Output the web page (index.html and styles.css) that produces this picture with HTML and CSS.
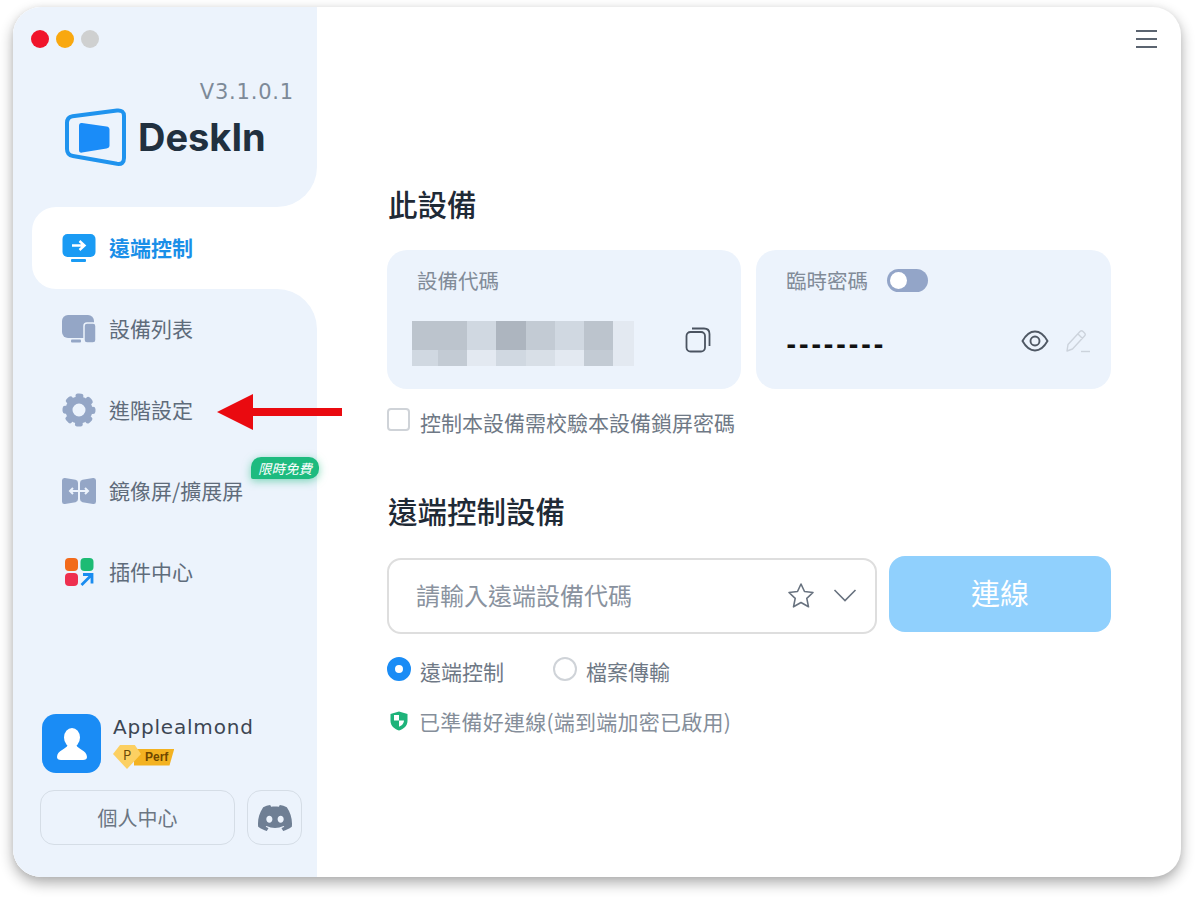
FILE: index.html
```html
<!DOCTYPE html>
<html lang="zh-Hant">
<head>
  <meta charset="UTF-8" />
  <title>DeskIn</title>
  <link rel="stylesheet" href="styles.css">
</head>
<body>
  <div class="window">
    <aside class="sidebar">
      <div class="side-head">
        <div class="dots">
          <span class="dot red"></span>
          <span class="dot orange"></span>
          <span class="dot grey"></span>
        </div>
        <div class="version">V3.1.0.1</div>
        <div class="logo">
          <svg width="62" height="58" viewBox="0 0 62 58">
            <path d="M3 15 Q3 9 8.500 8.200 L53 2.500 Q60 1.800 60 8 V50 Q60 56.800 53 55.800 L9 48 Q3 47 3 41 Z" fill="none" stroke="#1f93ee" stroke-width="4" stroke-linejoin="round"/>
            <path d="M15 18 Q15 14.600 18 15 L42.500 18.400 Q45.500 18.800 45.500 21.500 V37.500 Q45.500 40 42.500 40.400 L18 44.600 Q15 45 15 42 Z" fill="#1a8cf8"/>
          </svg>
          <span class="logo-text">DeskIn</span>
        </div>
      </div>

      <div class="active-row">
        <div class="nav-item active">
          <svg class="nav-icon" width="34" height="30" viewBox="0 0 34 30">
            <rect x="0.5" y="1" width="33" height="23" rx="5" fill="#1a9bf4"/>
            <rect x="9" y="26" width="15" height="3" rx="1" fill="#1a9bf4"/>
            <path d="M10 12.5 H22 M17.5 8 L22.5 12.5 L17.5 17" fill="none" stroke="#fff" stroke-width="2.4"/>
          </svg>
          <span>遠端控制</span>
        </div>
      </div>

      <div class="side-rest">
        <nav class="nav-list">
          <div class="nav-item">
            <svg class="nav-icon" width="34" height="30" viewBox="0 0 34 30">
              <rect x="0" y="1" width="32" height="23" rx="6" fill="#94a6c6"/>
              <rect x="9" y="25.500" width="10" height="3" rx="1" fill="#94a6c6"/>
              <rect x="22" y="9" width="12" height="20" rx="3" fill="#94a6c6" stroke="#ecf3fc" stroke-width="1.500"/>
            </svg>
            <span>設備列表</span>
          </div>
          <div class="nav-item">
            <svg class="nav-icon" width="34" height="34" viewBox="0 0 34 34">
              <circle cx="17" cy="17" r="14" fill="none" stroke="#94a6c6" stroke-width="5" stroke-linecap="round" stroke-dasharray="3 8" stroke-dashoffset="1.500"/>
              <circle cx="17" cy="17" r="10" fill="none" stroke="#94a6c6" stroke-width="7"/>
            </svg>
            <span>進階設定</span>
          </div>
          <div class="nav-item">
            <svg class="nav-icon" width="34" height="28" viewBox="0 0 34 28">
              <path d="M3 1 L13.500 2.800 Q16 3.300 16 6 V22 Q16 24.700 13.500 25.200 L3 27 Q0 27.400 0 24.500 V3.500 Q0 .6 3 1 Z" fill="#94a6c6"/>
              <path d="M31 1 L20.500 2.800 Q18 3.300 18 6 V22 Q18 24.700 20.500 25.200 L31 27 Q34 27.400 34 24.500 V3.500 Q34 .6 31 1 Z" fill="#94a6c6"/>
              <path d="M8 14 H26 M11 11 L8 14 L11 17 M23 11 L26 14 L23 17" fill="none" stroke="#ecf3fc" stroke-width="2"/>
            </svg>
            <span>鏡像屏/擴展屏</span>
          </div>
          <div class="nav-item">
            <svg class="nav-icon" width="34" height="30" viewBox="0 0 30 30">
              <rect x="1" y="1" width="13" height="13" rx="4" fill="#f26a1b"/>
              <rect x="16.500" y="1" width="13" height="13" rx="4" fill="#1dbb74"/>
              <rect x="1" y="16" width="13" height="13" rx="4" fill="#ee2f4f"/>
              <path d="M17.500 28 L27.500 18 M19 17.500 H28 V26.500" fill="none" stroke="#1a8cf0" stroke-width="2.8"/>
            </svg>
            <span>插件中心</span>
          </div>
        </nav>

        <div class="user">
          <div class="user-row">
            <div class="avatar">
              <svg width="32" height="34" viewBox="0 0 32 34">
                <ellipse cx="16" cy="10.500" rx="8" ry="9.500" fill="#fff"/>
                <path d="M11.500 18 C11 22 1 23 1 30 Q1 33 5 33 H27 Q31 33 31 30 C31 23 21 22 20.500 18 Z" fill="#fff"/>
              </svg>
            </div>
            <div class="user-info">
              <div class="user-name">Applealmond</div>
              <div class="tier">
                <span class="tier-gem">P</span>
                <span class="tier-band">Perf</span>
              </div>
            </div>
          </div>
          <div class="user-btns">
            <button class="profile-btn">個人中心</button>
            <button class="discord-btn">
              <svg width="34" height="34" viewBox="0 0 24 24"><path fill="#6f7f94" d="M20.317 4.3698a19.7913 19.7913 0 00-4.8851-1.5152.0741.0741 0 00-.0785.0371c-.211.3753-.4447.8648-.6083 1.2495-1.8447-.2762-3.68-.2762-5.4868 0-.1636-.3933-.4058-.8742-.6177-1.2495a.077.077 0 00-.0785-.037 19.7363 19.7363 0 00-4.8852 1.515.0699.0699 0 00-.0321.0277C.5334 9.0458-.319 13.5799.0992 18.0578a.0824.0824 0 00.0312.0561c2.0528 1.5076 4.0413 2.4228 5.9929 3.0294a.0777.0777 0 00.0842-.0276c.4616-.6304.8731-1.2952 1.226-1.9942a.076.076 0 00-.0416-.1057c-.6528-.2476-1.2743-.5495-1.8722-.8923a.077.077 0 01-.0076-.1277c.1258-.0943.2517-.1923.3718-.2914a.0743.0743 0 01.0776-.0105c3.9278 1.7933 8.18 1.7933 12.0614 0a.0739.0739 0 01.0785.0095c.1202.099.246.1981.3728.2924a.077.077 0 01-.0066.1276 12.2986 12.2986 0 01-1.873.8914.0766.0766 0 00-.0407.1067c.3604.698.7719 1.3628 1.225 1.9932a.076.076 0 00.0842.0286c1.961-.6067 3.9495-1.5219 6.0023-3.0294a.077.077 0 00.0313-.0552c.5004-5.177-.8382-9.6739-3.5485-13.6604a.061.061 0 00-.0312-.0286zM8.02 15.3312c-1.1825 0-2.1569-1.0857-2.1569-2.419 0-1.3332.9555-2.4189 2.157-2.4189 1.2108 0 2.1757 1.0952 2.1568 2.419 0 1.3332-.9555 2.4189-2.1569 2.4189zm7.9748 0c-1.1825 0-2.1569-1.0857-2.1569-2.419 0-1.3332.9554-2.4189 2.1569-2.4189 1.2108 0 2.1757 1.0952 2.1568 2.419 0 1.3332-.946 2.4189-2.1568 2.4189Z"/></svg>
            </button>
          </div>
        </div>
      </div>
    </aside>

    <main class="main">
      <div class="topbar">
        <div class="menu-btn"><span></span><span></span><span></span></div>
      </div>

      <h2 class="section-title first">此設備</h2>
      <div class="cards">
        <div class="card code-card">
          <div class="card-label">設備代碼</div>
          <div class="card-row">
            <div class="mosaic">
              <i class="s4"></i><i class="s4"></i><i class="s2"></i><i class="s5"></i><i class="s3"></i><i class="s2"></i><i class="s4"></i><i class="s0"></i>
              <i class="s2"></i><i class="s3"></i><i class="s0"></i><i class="s2"></i><i class="s1"></i><i class="s0"></i><i class="s3"></i><i class="s0"></i>
            </div>
            <svg class="copy-icon" width="26" height="26" viewBox="0 0 26 26">
              <rect x="1.500" y="5" width="18.500" height="19.500" rx="4" fill="none" stroke="#4a5360" stroke-width="1.800"/>
              <path d="M7 1.500 H19 Q24.500 1.500 24.500 7 V19" fill="none" stroke="#4a5360" stroke-width="1.800"/>
            </svg>
          </div>
        </div>
        <div class="card">
          <div class="card-label">
            臨時密碼
            <span class="switch"><span class="knob"></span></span>
          </div>
          <div class="card-row pass-row">
            <div class="pass-dashes">--------</div>
            <div class="pass-icons">
              <svg width="28" height="22" viewBox="0 0 28 22">
                <path d="M1.500 11 C6 3 10 1.500 14 1.500 C18 1.500 22 3 26.500 11 C22 19 18 20.500 14 20.500 C10 20.500 6 19 1.500 11 Z" fill="none" stroke="#4f5864" stroke-width="1.900"/>
                <circle cx="14" cy="11" r="4.500" fill="none" stroke="#4f5864" stroke-width="1.900"/>
              </svg>
              <svg width="26" height="24" viewBox="0 0 26 24">
                <path d="M2 22 L3 15.500 L15 2.500 Q16.500 1 18 2.500 L19.500 4 Q21 5.500 19.500 7 L7.500 20 Z M13 5 L17.500 9.500" fill="none" stroke="#ccd3dc" stroke-width="1.400" stroke-linejoin="round"/>
                <path d="M16 22.500 H25" stroke="#ccd3dc" stroke-width="1.400"/>
              </svg>
            </div>
          </div>
        </div>
      </div>
      <label class="check-row">
        <span class="checkbox"></span>
        <span>控制本設備需校驗本設備鎖屏密碼</span>
      </label>

      <h2 class="section-title second">遠端控制設備</h2>
      <div class="connect-row">
        <div class="code-input">
          <span class="placeholder">請輸入遠端設備代碼</span>
          <svg width="28" height="27" viewBox="0 0 28 27">
            <path d="M14 2 L17.500 9.500 L26 10.500 L19.800 16.300 L21.500 24.800 L14 20.500 L6.500 24.800 L8.200 16.300 L2 10.500 L10.500 9.500 Z" fill="none" stroke="#68727f" stroke-width="1.600" stroke-linejoin="round"/>
          </svg>
          <svg class="chevron" width="24" height="14" viewBox="0 0 24 14">
            <path d="M1.500 2 L12 12.500 L22.500 2" fill="none" stroke="#68727f" stroke-width="1.600"/>
          </svg>
        </div>
        <button class="connect-btn">連線</button>
      </div>
      <div class="radio-row">
        <label class="radio-item"><span class="radio on"></span>遠端控制</label>
        <label class="radio-item"><span class="radio"></span>檔案傳輸</label>
      </div>
      <div class="status-row">
        <svg width="18" height="20" viewBox="0 0 18 20">
          <path d="M9 .5 L17.500 3 V10 C17.500 15 13 18.500 9 19.500 C5 18.500 .5 15 .5 10 V3 Z" fill="#1eb37a"/>
          <path d="M9 4 H4 V9.500 H9 Z M9 9.500 H14 C14 12.500 11.500 14.800 9 15.800 Z" fill="#fff"/>
        </svg>
        <span>已準備好連線(端到端加密已啟用)</span>
      </div>
    </main>

    <!-- sits over the sidebar and main column -->
    <div class="free-tag">限時免費</div>
    <svg class="red-arrow" width="126" height="38" viewBox="0 0 126 38">
      <path d="M0 19 L36 1 V15 H125 V23 H36 V37 Z" fill="#ea0a10"/>
    </svg>
  </div>
</body>
</html>
```

FILE: styles.css
```css
* {
  margin: 0;
  padding: 0;
  box-sizing: border-box;
}

body {
  background-color: #fff;
  font-family: "Noto Sans CJK TC", "Noto Sans", sans-serif;
  padding: 7px 19px 24px 13px;
  overflow: hidden;
}

.window {
  position: relative;
  display: flex;
  width: 1168px;
  height: 870px;
  background-color: #fff;
  border-radius: 28px;
  box-shadow: 0 6px 14px rgba(0, 0, 0, 0.32), 0 0 6px rgba(0, 0, 0, 0.05);
  overflow: hidden;
}

/* sidebar */
.sidebar {
  display: flex;
  flex-direction: column;
  width: 304px;
  flex-shrink: 0;
  background-color: #fff;
}

.side-head {
  height: 200px;
  padding: 23px 23px 0 18px;
  background-color: #ecf3fc;
  border-bottom-right-radius: 40px;
}

.dots {
  display: flex;
  gap: 7px;
}

.dot {
  width: 18px;
  height: 18px;
  border-radius: 50%;
}

.red { background-color: #f0142b; }
.orange { background-color: #f9a80f; }
.grey { background-color: #cfd0d0; }

.version {
  margin-top: 31px;
  text-align: right;
  font-family: "DejaVu Sans", sans-serif;
  font-size: 21px;
  line-height: 26px;
  letter-spacing: 0.8px;
  color: #7d8a98;
}

.logo {
  display: flex;
  align-items: center;
  gap: 12px;
  margin: 3px 0 0 33px;
  height: 58px;
}

.logo-text {
  font-family: Inter, sans-serif;
  font-size: 38px;
  font-weight: 700;
  color: #21303f;
}

.active-row {
  padding-left: 19px;
  background-color: #ecf3fc;
}

.nav-item {
  display: flex;
  align-items: center;
  gap: 13px;
  height: 81px;
  padding-left: 30px;
  padding-bottom: 1px;
  font-size: 21px;
  color: #5f6c7b;
}

.nav-item span {
  margin-bottom: 2px;
}

.nav-item.active {
  height: 82px;
  background-color: #fff;
  border-radius: 24px 0 0 24px;
  color: #1a8fe8;
  font-weight: 700;
}

.nav-icon {
  flex-shrink: 0;
}

.side-rest {
  flex: 1;
  display: flex;
  flex-direction: column;
  justify-content: space-between;
  padding-left: 19px;
  background-color: #ecf3fc;
  border-top-right-radius: 40px;
}

.user {
  margin-left: 8px;
  padding-bottom: 32px;
}

.user-row {
  display: flex;
  gap: 12px;
  padding-left: 2px;
}

.avatar {
  display: flex;
  align-items: center;
  justify-content: center;
  width: 59px;
  height: 59px;
  border-radius: 14px;
  background-color: #1a8cf5;
}

.user-name {
  font-family: "DejaVu Sans", sans-serif;
  font-size: 20px;
  line-height: 26px;
  letter-spacing: 0.8px;
  color: #3c4653;
}

.tier {
  display: flex;
  align-items: center;
  margin-top: 5px;
  height: 24px;
}

.tier-gem {
  position: relative;
  z-index: 1;
  display: flex;
  align-items: center;
  justify-content: center;
  width: 28px;
  height: 24px;
  padding-bottom: 5px;
  background-color: #fcd062;
  clip-path: polygon(25% 0, 78% 0, 100% 38%, 50% 100%, 0 38%);
  font-size: 13px;
  line-height: 1;
  color: #6b4a08;
}

.tier-band {
  margin-left: -7px;
  padding: 0 6px 0 11px;
  height: 17px;
  font-family: "Liberation Sans", sans-serif;
  font-size: 12px;
  line-height: 17px;
  font-weight: 700;
  color: #6e4700;
  background-color: #f3b221;
  clip-path: polygon(0 0, 100% 0, 88% 100%, 0 100%);
}

.user-btns {
  display: flex;
  gap: 12px;
  margin-top: 17px;
}

.profile-btn,
.discord-btn {
  height: 55px;
  background: transparent;
  border: 1px solid #d5dde6;
  border-radius: 14px;
  color: #6b7683;
  font-family: inherit;
  font-size: 20px;
}

.profile-btn {
  width: 195px;
}

.discord-btn {
  display: flex;
  align-items: center;
  justify-content: center;
  width: 55px;
}

/* main column */
.main {
  flex: 1;
  padding: 0 70px;
}

.topbar {
  display: flex;
  justify-content: flex-end;
  height: 45px;
  margin-right: -46px;
  padding-top: 23px;
}

.menu-btn {
  display: flex;
  flex-direction: column;
  gap: 6px;
  width: 21px;
}

.menu-btn span {
  height: 2px;
  background-color: #5b6470;
}

.section-title {
  font-size: 29.5px;
  line-height: 40px;
  font-weight: 500;
  color: #1f2a36;
  padding-left: 1px;
}

.section-title.first {
  margin-top: 131px;
}

.section-title.second {
  margin-top: 53px;
}

.cards {
  display: flex;
  gap: 15px;
  margin-top: 27px;
}

.card {
  flex: 1;
  height: 139px;
  padding: 14px 30px 0 30px;
  background-color: #ecf3fc;
  border-radius: 20px;
}

.code-card {
  flex: 0 0 354px;
}

.card-label {
  display: flex;
  align-items: center;
  gap: 19px;
  height: 32px;
  font-size: 20.500px;
  color: #818b98;
}

.switch {
  position: relative;
  width: 41px;
  height: 23px;
  border-radius: 12px;
  background-color: #93a5c8;
}

.knob {
  position: absolute;
  left: 3px;
  top: 3px;
  width: 17px;
  height: 17px;
  border-radius: 50%;
  background-color: #fff;
}

.card-row {
  display: flex;
  align-items: center;
  justify-content: space-between;
  margin-top: 25px;
  margin-left: -5px;
}

.mosaic {
  display: grid;
  grid-template-columns: 26px 29px 29px 30px 29px 29px 29px 21px;
  grid-template-rows: 29px 16px;
}

.s0 { background-color: #e3e9f1; }
.s1 { background-color: #d8dfe7; }
.s2 { background-color: #d0d8e1; }
.s3 { background-color: #c3cbd4; }
.s4 { background-color: #bcc4cd; }
.s5 { background-color: #adb5bf; }

.pass-row {
  margin-left: -2px;
  margin-top: 25px;
  margin-right: -10px;
}

.pass-dashes {
  padding-top: 8px;
  font-family: "DejaVu Sans Mono", monospace;
  font-size: 24px;
  line-height: 32px;
  font-weight: 700;
  color: #111;
  letter-spacing: -2px;
}

.pass-icons {
  display: flex;
  align-items: center;
  gap: 16px;
}

.copy-icon {
  margin: 0 0 7px 0;
}

.check-row {
  display: flex;
  align-items: center;
  gap: 10px;
  margin-top: 18px;
  height: 30px;
  font-size: 21px;
  color: #6f7986;
}

.checkbox {
  width: 23px;
  height: 23px;
  border: 2px solid #cfd3d8;
  border-radius: 4px;
  margin-top: -6px;
}

.connect-row {
  display: flex;
  gap: 12px;
  margin-top: 26px;
}

.code-input {
  display: flex;
  align-items: center;
  width: 490px;
  height: 76px;
  padding: 0 18px 2px 27px;
  margin-top: 2px;
  border: 2px solid #dedede;
  border-radius: 14px;
}

.placeholder {
  flex: 1;
  padding-bottom: 2px;
  font-size: 24px;
  color: #8a939f;
}

.chevron {
  margin-left: 18px;
}

.connect-btn {
  width: 222px;
  height: 76px;
  padding-bottom: 4px;
  border: none;
  border-radius: 16px;
  background-color: #90d0fd;
  color: #fff;
  font-family: inherit;
  font-size: 29px;
}

.radio-row {
  display: flex;
  gap: 49px;
  margin-top: 20px;
}

.radio-item {
  display: flex;
  align-items: center;
  gap: 9px;
  height: 34px;
  font-size: 21px;
  color: #6f7986;
}

.radio {
  width: 24px;
  height: 24px;
  border: 2px solid #cfd3d8;
  border-radius: 50%;
  margin-top: -5px;
}

.radio.on {
  border: 8px solid #1a8cf5;
  background-color: #fff;
}

.status-row {
  display: flex;
  align-items: center;
  gap: 11px;
  margin-top: 16px;
  padding-left: 3px;
  height: 34px;
  font-size: 21px;
  letter-spacing: 0.25px;
  color: #858e9a;
}

/* overlays */
.free-tag {
  position: absolute;
  left: 238px;
  top: 450px;
  width: 68px;
  height: 22px;
  border-radius: 10px 10px 10px 2px;
  background-color: #1dbb7f;
  box-shadow: 0 2px 8px rgba(29, 187, 127, 0.55);
  color: #fff;
  font-size: 13.500px;
  font-style: italic;
  line-height: 22px;
  text-align: center;
}

.red-arrow {
  position: absolute;
  left: 204px;
  top: 386px;
}
```
